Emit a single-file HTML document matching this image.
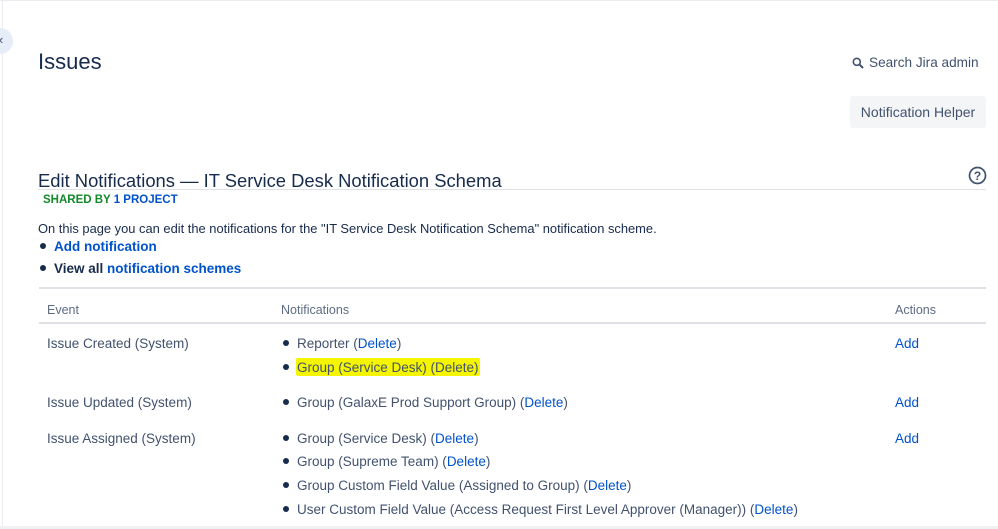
<!DOCTYPE html>
<html><head><meta charset="utf-8"><style>
*{margin:0;padding:0;box-sizing:border-box}
body{width:998px;height:529px;overflow:hidden;background:#fff;font-family:"Liberation Sans",sans-serif;color:#172b4d;position:relative}
.a{position:absolute;white-space:nowrap}
.l{color:#0052cc}
.t{font-size:13.5px;color:#42526e}
.dot{display:inline-block;width:6px;height:6px;border-radius:50%;background:#172b4d;vertical-align:middle;margin-right:8px;position:relative;top:-1px}
</style></head><body>
<div class="a" style="left:0;top:0;width:998px;height:1px;background:#ebecf0"></div>
<div class="a" style="left:2px;top:0;width:1px;height:529px;background:#ebecf0"></div>
<div class="a" style="left:-13px;top:28px;width:26px;height:26px;border-radius:50%;background:#e6ecf8"></div>
<div class="a" style="left:-1px;top:32px;font-size:13px;color:#42526e">&lsaquo;</div>
<div class="a" style="left:38px;top:49px;font-size:22px;color:#172b4d">Issues</div>
<svg class="a" style="left:852px;top:57px" width="12" height="12" viewBox="0 0 12 12"><circle cx="4.8" cy="4.8" r="3.5" fill="none" stroke="#42526e" stroke-width="1.6"/><path d="M7.4 7.4L11 11" stroke="#42526e" stroke-width="2"/></svg>
<div class="a" style="left:869px;top:55px;font-size:13.6px;color:#42526e">Search Jira admin</div>
<div class="a" style="left:850px;top:96px;width:136px;height:32px;background:#f4f5f7;border-radius:3px;font-size:14px;color:#42526e;line-height:32px;text-align:center">Notification Helper</div>
<div class="a" style="left:38px;top:170px;font-size:18.4px;color:#172b4d">Edit Notifications — IT Service Desk Notification Schema</div>
<div class="a" style="left:38px;top:189px;width:948px;height:1px;background:#dfe1e6"></div>
<svg class="a" style="left:968px;top:166px" width="19" height="19" viewBox="0 0 19 19"><circle cx="9.5" cy="9.5" r="8" fill="none" stroke="#42526e" stroke-width="1.7"/><text x="9.5" y="14" font-size="12" font-weight="bold" font-family="Liberation Sans" text-anchor="middle" fill="#42526e">?</text></svg>
<div class="a" style="left:43px;top:194px;font-size:11.5px;font-weight:bold;color:#14892c">SHARED BY <span class="l">1 PROJECT</span></div>
<div class="a" style="left:38px;top:221px;font-size:12.9px;color:#172b4d">On this page you can edit the notifications for the "IT Service Desk Notification Schema" notification scheme.</div>
<div class="a" style="left:40px;top:239px;font-size:13.5px;font-weight:bold"><span class="dot"></span><span class="l">Add notification</span></div>
<div class="a" style="left:40px;top:261px;font-size:13.5px;font-weight:bold"><span class="dot"></span>View all <span class="l">notification schemes</span></div>
<div class="a" style="left:39px;top:287px;width:947px;height:2px;background:#dfe1e6"></div>
<div class="a" style="left:47px;top:303px;font-size:12.5px;color:#5e6c84">Event</div>
<div class="a" style="left:281px;top:303px;font-size:12.5px;color:#5e6c84">Notifications</div>
<div class="a" style="left:895px;top:303px;font-size:12.5px;color:#5e6c84">Actions</div>
<div class="a" style="left:39px;top:322px;width:947px;height:2px;background:#dfe1e6"></div>
<div class="a t" style="left:47px;top:336px">Issue Created (System)</div>
<div class="a t" style="left:47px;top:395px">Issue Updated (System)</div>
<div class="a t" style="left:47px;top:431px">Issue Assigned (System)</div>
<div class="a t l" style="left:895px;top:336px;color:#0052cc">Add</div>
<div class="a t l" style="left:895px;top:395px;color:#0052cc">Add</div>
<div class="a t l" style="left:895px;top:431px;color:#0052cc">Add</div>
<div class="a" style="left:296px;top:358px;width:184px;height:18px;background:#f5f500;border-radius:2px"></div>
<div class="a t" style="left:283px;top:336px"><span class="dot"></span>Reporter (<span class="l">Delete</span>)</div>
<div class="a t" style="left:283px;top:360px"><span class="dot"></span>Group (Service Desk) (Delete)</div>
<div class="a t" style="left:283px;top:395px"><span class="dot"></span>Group (GalaxE Prod Support Group) (<span class="l">Delete</span>)</div>
<div class="a t" style="left:283px;top:431px"><span class="dot"></span>Group (Service Desk) (<span class="l">Delete</span>)</div>
<div class="a t" style="left:283px;top:454px"><span class="dot"></span>Group (Supreme Team) (<span class="l">Delete</span>)</div>
<div class="a t" style="left:283px;top:478px"><span class="dot"></span>Group Custom Field Value (Assigned to Group) (<span class="l">Delete</span>)</div>
<div class="a t" style="left:283px;top:502px"><span class="dot"></span>User Custom Field Value (Access Request First Level Approver (Manager)) (<span class="l">Delete</span>)</div>
<div class="a" style="left:0;top:526px;width:998px;height:3px;background:#f0f1f3"></div>
</body></html>
